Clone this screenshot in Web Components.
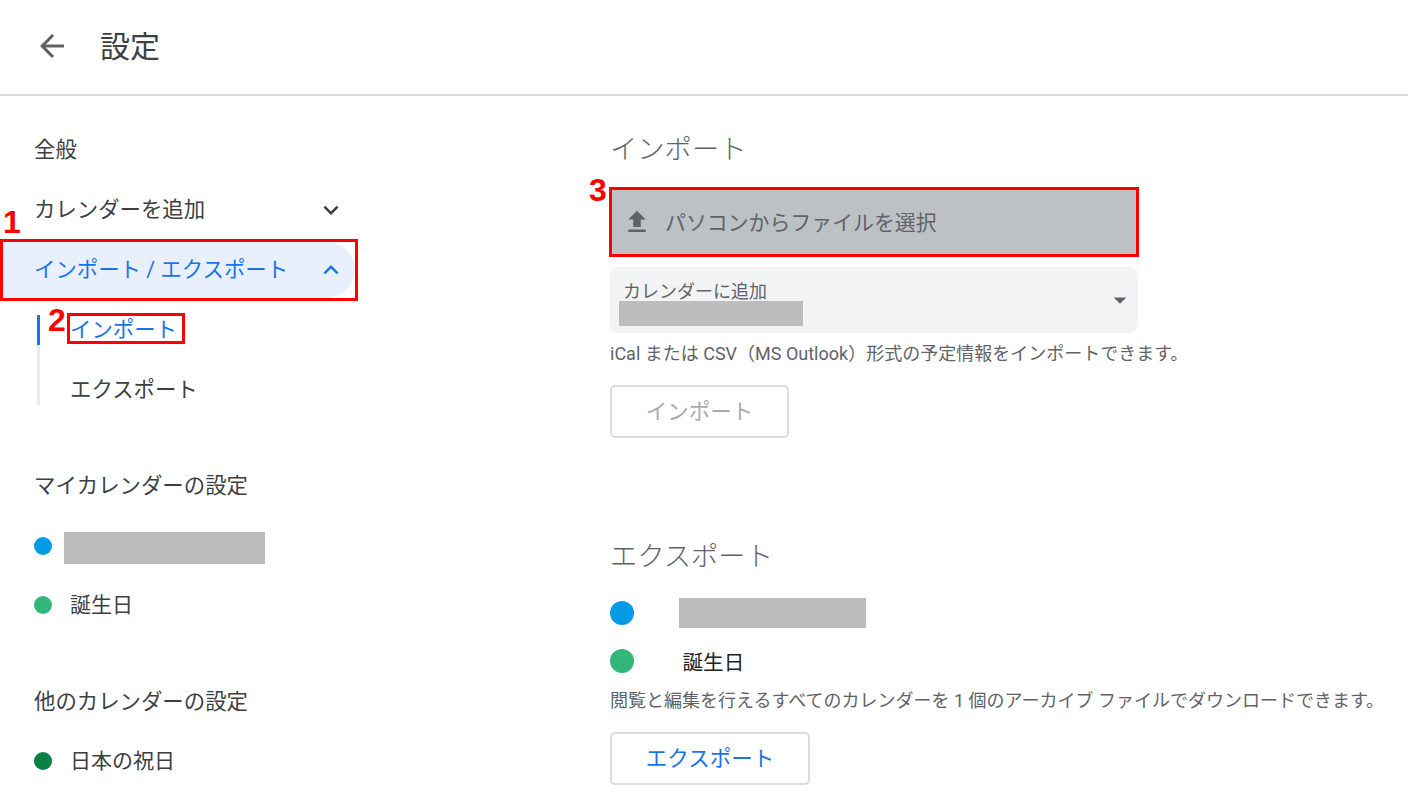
<!DOCTYPE html>
<html lang="ja">
<head>
<meta charset="utf-8">
<title>設定</title>
<style>
  html, body { margin: 0; height: 100%; background: #fff; overflow: hidden; }
  body { font-family: Roboto, "Noto Sans CJK JP", sans-serif; color: #3c4043; }
</style>
</head>
<body>
<settings-page>
  <app-header slot="header">設定</app-header>
  <settings-nav slot="nav"></settings-nav>
  <settings-main slot="main"></settings-main>
</settings-page>

<red-box style="left:0;top:239px;width:358px;height:62px"></red-box>
<red-box style="left:67px;top:313px;width:118px;height:31px"></red-box>
<red-box style="left:609px;top:187px;width:530px;height:70px"></red-box>
<red-num style="left:3px;top:205px">1</red-num>
<red-num style="left:48px;top:303px">2</red-num>
<red-num style="left:589px;top:173px">3</red-num>

<script>
const ICONS = {
    back: 'M20 11H7.83l5.59-5.59L12 4l-8 8 8 8 1.41-1.41L7.83 13H20v-2z',
    down: 'M16.59 8.59L12 13.17 7.41 8.59 6 10l6 6 6-6z',
    up: 'M12 8l-6 6 1.41 1.41L12 10.83l4.59 4.58L18 14z',
    upload: 'M9 16h6v-6h4l-7-7-7 7h4zm-4 2h14v2H5z',
    caret: 'M7 10l5 5 5-5z'
};

class BaseEl extends HTMLElement {
    constructor() {
        super();
        this.attachShadow({ mode: 'open' });
    }

    connectedCallback() {
        this.render();
    }

    render() {
        const template = document.createElement('template');
        template.innerHTML = this.html();
        this.shadowRoot.innerHTML = '';
        this.shadowRoot.appendChild(template.content.cloneNode(true));
    }
}

class MatIcon extends BaseEl {
    html() {
        const size = this.getAttribute('size') || 30;
        const name = this.getAttribute('name');
        return `
            <style>
                :host { display: block; width: ${size}px; height: ${size}px; flex: none; color: inherit; }
                svg { display: block; width: 100%; height: 100%; fill: currentColor; }
            </style>
            <svg viewBox="0 0 24 24"><path d="${ICONS[name]}"></path></svg>
        `;
    }
}

class SettingsPage extends BaseEl {
    html() {
        return `
            <style>
                :host { display: block; width: 1408px; height: 801px; overflow: hidden; }
                .body { display: flex; align-items: flex-start; }
            </style>
            <slot name="header"></slot>
            <div class="body">
                <slot name="nav"></slot>
                <slot name="main"></slot>
            </div>
        `;
    }
}

class AppHeader extends BaseEl {
    html() {
        return `
            <style>
                :host { display: flex; align-items: center; height: 94px; border-bottom: 2px solid #dadce0; padding-left: 34px; color: #3c4043; }
                mat-icon { color: #5f6368; margin-top: -2px; }
                span { font-size: 30px; margin-left: 30px; line-height: 40px; }
            </style>
            <mat-icon name="back" size="36"></mat-icon>
            <span><slot></slot></span>
        `;
    }
}

class NavItem extends BaseEl {
    html() {
        const active = this.hasAttribute('active');
        const icon = this.getAttribute('icon');
        return `
            <style>
                :host { display: block; height: 60px; font-size: 21.4px; color: #3c4043; }
                .row { display: flex; align-items: center; justify-content: space-between; height: 100%; padding: 0 9px 0 34px; box-sizing: border-box; }
                .row.active { height: 56px; width: 355px; position: relative; top: 2px; background: #e8f0fe; color: #1a73e8; border-radius: 0 28px 28px 0; }
                span { white-space: nowrap; line-height: 30px; }
            </style>
            <div class="row ${active ? 'active' : ''}" style="${icon && !active ? 'width:355px' : ''}">
                <span><slot></slot></span>
                ${icon ? `<mat-icon name="${icon}" size="30"></mat-icon>` : ''}
            </div>
        `;
    }
}

class CalRow extends BaseEl {
    html() {
        const color = this.getAttribute('color');
        const blank = this.getAttribute('blank');
        return `
            <style>
                :host { display: flex; align-items: center; height: 60px; padding-left: 34px; font-size: 21px; color: #3c4043; }
                i { display: block; width: 18px; height: 18px; border-radius: 50%; background: ${color}; flex: none; }
                span { margin-left: 18px; line-height: 30px; white-space: nowrap; }
                b { display: block; background: #bdbdbd; margin: 4px 0 0 12px; width: ${blank}px; height: 32px; }
            </style>
            <i></i>
            ${blank ? '<b></b>' : '<span><slot></slot></span>'}
        `;
    }
}

class SettingsNav extends BaseEl {
    html() {
        return `
            <style>
                :host { display: block; width: 610px; flex: none; padding-top: 24px; box-sizing: border-box; }
                .sub { display: flex; }
                .bar { width: 3px; margin: 15px 0 0 37px; height: 90px; background: linear-gradient(#1a73e8 30px, #e8eaed 30px); flex: none; }
                .items { margin-left: -4px; }
                .items nav-item:first-child { color: #1a73e8; }
                .items nav-item { width: 200px; }
            </style>
            <nav-item>全般</nav-item>
            <nav-item icon="down">カレンダーを追加</nav-item>
            <nav-item active icon="up">インポート / エクスポート</nav-item>
            <div class="sub">
                <div class="bar"></div>
                <div class="items">
                    <nav-item>インポート</nav-item>
                    <nav-item>エクスポート</nav-item>
                </div>
            </div>
            <nav-item style="margin-top:36px">マイカレンダーの設定</nav-item>
            <cal-row color="#039be5" blank="201"></cal-row>
            <cal-row color="#33b679" style="margin-top:-1px">誕生日</cal-row>
            <nav-item style="margin-top:37px">他のカレンダーの設定</nav-item>
            <cal-row color="#0b8043" style="margin-top:-1px">日本の祝日</cal-row>
        `;
    }
}

class UploadButton extends BaseEl {
    html() {
        return `
            <style>
                :host { display: flex; align-items: center; height: 64px; background: #bdc1c6; color: #5f6368; font-size: 20.9px; padding-left: 12px; }
                mat-icon { color: #5f6368; }
                span { margin: -2px 0 0 13px; white-space: nowrap; }
            </style>
            <mat-icon name="upload" size="30"></mat-icon>
            <span><slot></slot></span>
        `;
    }
}

class CalSelect extends BaseEl {
    html() {
        return `
            <style>
                :host { display: block; position: relative; height: 66px; background: #f1f3f4; border-radius: 8px; color: #5f6368; }
                .label { font-size: 18px; line-height: 24px; padding: 13px 0 0 13px; white-space: nowrap; color: #5f6368; }
                .val { width: 184px; height: 25px; background: #bdbdbd; margin: -3px 0 0 9px; }
                mat-icon { position: absolute; right: 3px; top: 18px; }
            </style>
            <div class="label"><slot></slot></div>
            <div class="val"></div>
            <mat-icon name="caret" size="30"></mat-icon>
        `;
    }
}

class OutlineButton extends BaseEl {
    html() {
        const disabled = this.hasAttribute('disabled');
        const width = this.getAttribute('width');
        return `
            <style>
                :host { display: flex; align-items: center; justify-content: center; box-sizing: border-box; width: ${width}px; height: 53px; padding-bottom: 4px; border: 2px solid #dadce0; border-radius: 5px; font-size: 21.5px; color: ${disabled ? '#a8abaf' : '#1a73e8'}; background: #fff; }
            </style>
            <slot></slot>
        `;
    }
}

class ExportRow extends BaseEl {
    html() {
        const color = this.getAttribute('color');
        const blank = this.getAttribute('blank');
        return `
            <style>
                :host { display: flex; align-items: center; height: 48px; font-size: 20.6px; color: #202124; }
                i { display: block; width: 24px; height: 24px; border-radius: 50%; background: ${color}; flex: none; }
                span { margin-left: 48.5px; white-space: nowrap; }
                b { display: block; width: ${blank}px; height: 30px; background: #bdbdbd; margin-left: 45px; }
            </style>
            <i></i>
            ${blank ? '<b></b>' : '<span><slot></slot></span>'}
        `;
    }
}

class SettingsMain extends BaseEl {
    html() {
        return `
            <style>
                :host { display: block; width: 798px; padding-top: 34px; box-sizing: border-box; }
                h2 { margin: 0; font-size: 27.3px; font-weight: 300; line-height: 40px; color: #5f6368; white-space: nowrap; }
                p { margin: 0; height: 26px; font-size: 18px; line-height: 26px; color: #5f6368; white-space: nowrap; }
                upload-button { width: 527px; margin-top: 20px; box-sizing: border-box; }
                cal-select { width: 528px; margin-top: 13px; }
            </style>
            <h2>インポート</h2>
            <upload-button>パソコンからファイルを選択</upload-button>
            <cal-select>カレンダーに追加</cal-select>
            <p style="margin-top:8px">iCal または CSV（MS Outlook）形式の予定情報をインポートできます。</p>
            <outline-button disabled width="179" style="margin-top:18px">インポート</outline-button>
            <h2 style="margin-top:99px">エクスポート</h2>
            <export-row color="#039be5" blank="187" style="margin-top:12px"></export-row>
            <export-row color="#33b679">誕生日</export-row>
            <p style="margin-top:3px">閲覧と編集を行えるすべてのカレンダーを 1 個のアーカイブ ファイルでダウンロードできます。</p>
            <outline-button width="200" style="margin-top:18px">エクスポート</outline-button>
        `;
    }
}

class RedBox extends BaseEl {
    html() {
        return `
            <style>
                :host { display: block; position: absolute; box-sizing: border-box; border: 3px solid #ff0000; }
            </style>
        `;
    }
}

class RedNum extends BaseEl {
    html() {
        return `
            <style>
                :host { display: block; position: absolute; font: bold 32px/34px "Liberation Sans", Arial, sans-serif; color: #ff0000; }
            </style>
            <slot></slot>
        `;
    }
}

customElements.define('mat-icon', MatIcon);
customElements.define('settings-page', SettingsPage);
customElements.define('app-header', AppHeader);
customElements.define('nav-item', NavItem);
customElements.define('cal-row', CalRow);
customElements.define('settings-nav', SettingsNav);
customElements.define('upload-button', UploadButton);
customElements.define('cal-select', CalSelect);
customElements.define('outline-button', OutlineButton);
customElements.define('export-row', ExportRow);
customElements.define('settings-main', SettingsMain);
customElements.define('red-box', RedBox);
customElements.define('red-num', RedNum);
</script>
</body>
</html>
